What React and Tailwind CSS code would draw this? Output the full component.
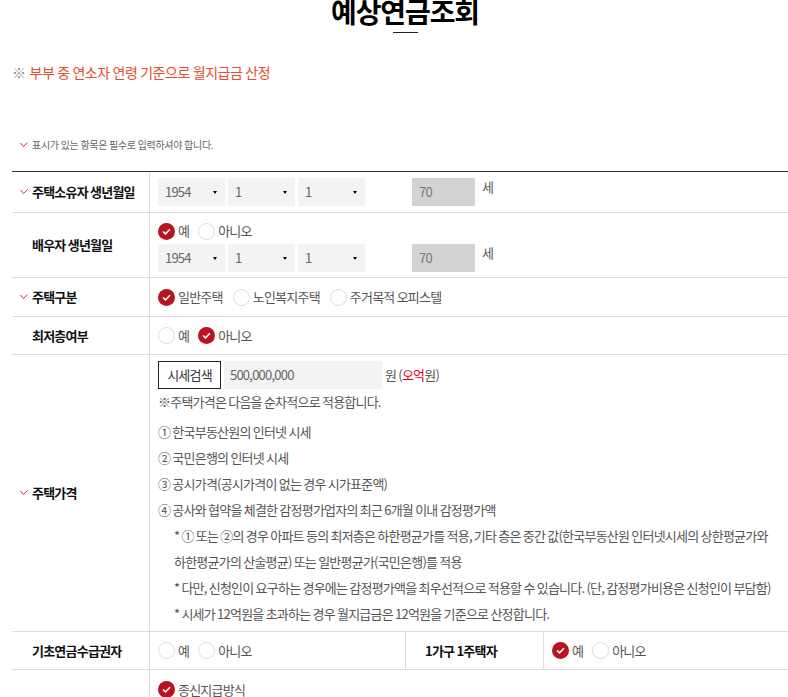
import React from 'react';

const font = { fontFamily: '"Noto Sans CJK KR", "Noto Sans", sans-serif' };

const Check = () => (
  <svg width="8" height="6" viewBox="0 0 8 6" className="shrink-0">
    <polyline points="0.5,1 3.5,4.5 7.5,0.5" fill="none" stroke="#c8323c" strokeWidth="1" />
  </svg>
);

const Radio = ({ checked, label }) => (
  <span className="flex items-center gap-[3px]">
    {checked ? (
      <span className="w-[17px] h-[17px] rounded-full bg-[#b8141f] flex items-center justify-center">
        <svg width="9" height="7" viewBox="0 0 9 7">
          <polyline points="1,3.5 3.5,5.8 8,1.2" fill="none" stroke="#fff" strokeWidth="1.6" />
        </svg>
      </span>
    ) : (
      <span className="w-[17px] h-[17px] rounded-full border border-[#dcdcdc] bg-white" />
    )}
    <span>{label}</span>
  </span>
);

const Select = ({ value }) => (
  <div className="w-[67px] h-[28px] bg-[#f3f3f3] flex items-center justify-between pl-[7px] pr-[8px] text-[#666]">
    <span>{value}</span>
    <span className="w-0 h-0 border-l-[2.5px] border-r-[2.5px] border-t-[3.5px] border-l-transparent border-r-transparent border-t-black" />
  </div>
);

const DateRow = () => (
  <div className="flex items-start">
    <div className="flex gap-[3px]">
      <Select value="1954" />
      <Select value="1" />
      <Select value="1" />
    </div>
    <div className="ml-[47px] w-[63px] h-[28px] bg-[#d3d3d3] flex items-center pl-[7px] text-[#777]">70</div>
    <span className="ml-[7px] -mt-[1px] text-[#555]">세</span>
  </div>
);

const Label = ({ req, children, className = '' }) => (
  <div className={`w-[138px] shrink-0 border-r border-[#ddd] flex items-center pl-[8px] font-bold text-[#111] ${className}`}>
    <span className="w-[12px] flex">{req && <Check />}</span>
    <span>{children}</span>
  </div>
);

const Row = ({ children, className = '' }) => (
  <div className={`flex border-b border-[#ddd] ${className}`}>{children}</div>
);

export default function App() {
  return (
    <div className="w-[788px] h-[697px] overflow-hidden bg-white text-[13px] tracking-[-0.06em] text-[#555]" style={font}>
      <div className="ml-[12px] w-[786px]">
        <h1 className="-mt-[3px] text-center text-[28px] leading-none font-bold text-black tracking-[-0.04em]">예상연금조회</h1>
        <div className="mx-auto mt-[7px] w-[25px] h-[1px] bg-[#222]" />

        <p className="mt-[29px] text-[14px] text-[#ea4a2d] tracking-[-0.03em]">
          <span className="text-[#888] mr-[4px]">※</span>부부 중 연소자 연령 기준으로 월지급금 산정
        </p>

        <p className="mt-[54px] ml-[8px] flex items-center gap-[4px] text-[10px] text-[#666] tracking-[-0.03em]">
          <Check /> 표시가 있는 항목은 필수로 입력하셔야 합니다.
        </p>

        <div className="mt-[19px] border-t border-[#333]">
          <Row>
            <Label req>주택소유자 생년월일</Label>
            <div className="pl-[8px] py-[6px]">
              <DateRow />
            </div>
          </Row>

          <Row>
            <Label>배우자 생년월일</Label>
            <div className="pl-[8px] pt-[8px] pb-[5px] flex flex-col gap-[3px]">
              <div className="flex gap-[9px] h-[20px] items-center">
                <Radio checked label="예" />
                <Radio label="아니오" />
              </div>
              <DateRow />
            </div>
          </Row>

          <Row className="h-[39px]">
            <Label req>주택구분</Label>
            <div className="pl-[8px] flex items-center gap-[10px]">
              <Radio checked label="일반주택" />
              <Radio label="노인복지주택" />
              <Radio label="주거목적 오피스텔" />
            </div>
          </Row>

          <Row className="h-[38px]">
            <Label>최저층여부</Label>
            <div className="pl-[8px] flex items-center gap-[9px]">
              <Radio label="예" />
              <Radio checked label="아니오" />
            </div>
          </Row>

          <Row>
            <Label req>주택가격</Label>
            <div className="pl-[8px] pt-[6px] pb-[4px]">
              <div className="flex items-center">
                <button className="h-[28px] w-[63px] border border-[#222] text-[#333] bg-white">시세검색</button>
                <div className="ml-[3px] w-[158px] h-[28px] bg-[#f3f3f3] flex items-center pl-[6px] text-[#666]">500,000,000</div>
                <span className="ml-[3px] text-[#555]">원 (<span className="text-[#e60012]">오억</span>원)</span>
              </div>
              <p className="leading-[26px]">※주택가격은 다음을 순차적으로 적용합니다.</p>
              <div className="mt-[4px] leading-[26px] whitespace-nowrap">
                <p>① 한국부동산원의 인터넷 시세</p>
                <p>② 국민은행의 인터넷 시세</p>
                <p>③ 공시가격(공시가격이 없는 경우 시가표준액)</p>
                <p>④ 공사와 협약을 체결한 감정평가업자의 최근 6개월 이내 감정평가액</p>
                <div className="pl-[16px]">
                  <p>* ① 또는 ②의 경우 아파트 등의 최저층은 하한평균가를 적용, 기타 층은 중간 값(한국부동산원 인터넷시세의 상한평균가와</p>
                  <p>하한평균가의 산술평균) 또는 일반평균가(국민은행)를 적용</p>
                  <p>* 다만, 신청인이 요구하는 경우에는 감정평가액을 최우선적으로 적용할 수 있습니다. (단, 감정평가비용은 신청인이 부담함)</p>
                  <p>* 시세가 12억원을 초과하는 경우 월지급금은 12억원을 기준으로 산정합니다.</p>
                </div>
              </div>
            </div>
          </Row>

          <Row className="h-[38px]">
            <Label>기초연금수급권자</Label>
            <div className="w-[256px] shrink-0 border-r border-[#ddd] pl-[8px] flex items-center gap-[9px]">
              <Radio label="예" />
              <Radio label="아니오" />
            </div>
            <div className="w-[138px] shrink-0 border-r border-[#ddd] pl-[19px] flex items-center font-bold text-[#111]">1가구 1주택자</div>
            <div className="pl-[8px] flex items-center gap-[9px]">
              <Radio checked label="예" />
              <Radio label="아니오" />
            </div>
          </Row>

          <Row className="h-[60px]">
            <Label />
            <div className="pl-[8px] pt-[10px]">
              <Radio checked label="종신지급방식" />
            </div>
          </Row>
        </div>
      </div>
    </div>
  );
}
